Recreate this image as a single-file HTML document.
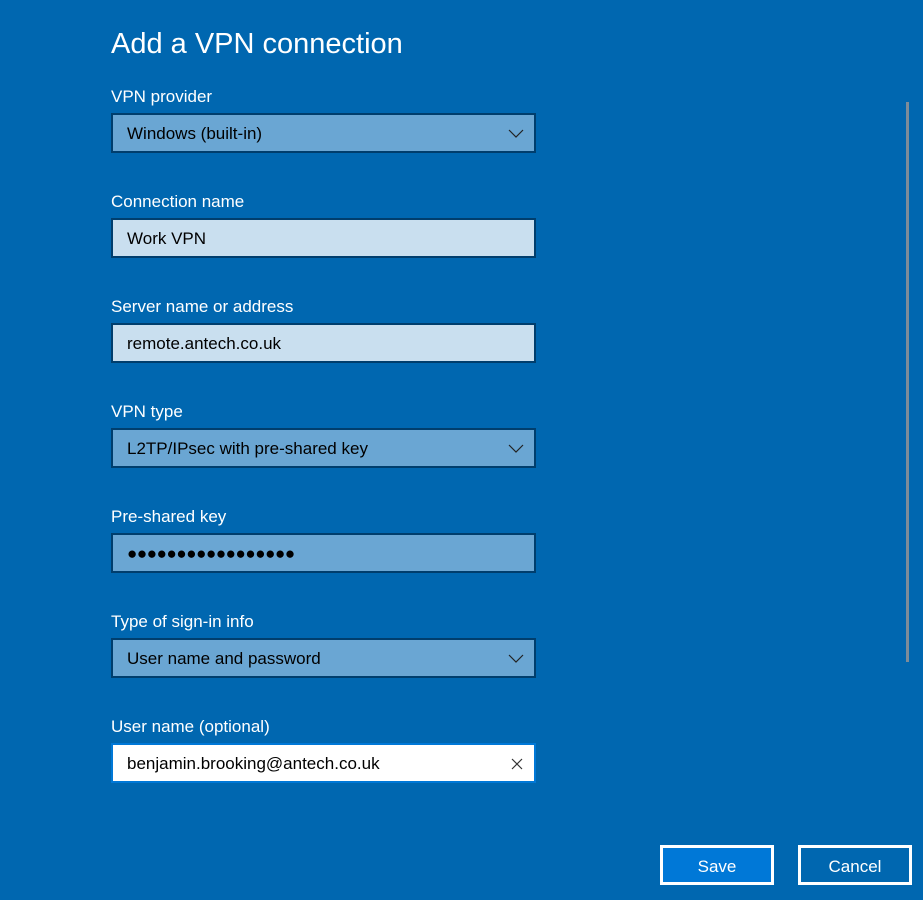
<!DOCTYPE html>
<html><head><style>
body{margin:0;width:923px;height:900px;background:#0067b0;font-family:"Liberation Sans",sans-serif;color:#fff;position:relative;overflow:hidden}
.t{position:absolute;left:111px;top:28px;font-size:29px;letter-spacing:0}
.l{position:absolute;left:111px;font-size:17px}
.f{position:absolute;left:111px;height:36px;border:2px solid #003e6d;box-sizing:content-box;color:#000;font-size:17px;line-height:38px;padding-left:14px;width:407px}
.d{background:#6aa6d3}
.x{background:#c9dfef}
.w{background:#fff;border-color:#0078d7}
.ch{position:absolute;right:10px;top:14px}
.sb{position:absolute;left:906px;top:102px;width:3px;height:560px;background:#7d8c99}
.b{position:absolute;top:845px;width:108px;height:34px;border:3px solid #fff;font-size:17px;line-height:38px;text-align:center}
</style></head><body>
<div class="t">Add a VPN connection</div>
<div class="l" style="top:87px">VPN provider</div>
<div class="f d" style="top:113px">Windows (built-in)<svg class="ch" width="16" height="10"><path d="M1 1l7 7 7-7" stroke="#222" fill="none" stroke-width="1.2"/></svg></div>
<div class="l" style="top:192px">Connection name</div>
<div class="f x" style="top:218px">Work VPN</div>
<div class="l" style="top:297px">Server name or address</div>
<div class="f x" style="top:323px">remote.antech.co.uk</div>
<div class="l" style="top:402px">VPN type</div>
<div class="f d" style="top:428px">L2TP/IPsec with pre-shared key<svg class="ch" width="16" height="10"><path d="M1 1l7 7 7-7" stroke="#222" fill="none" stroke-width="1.2"/></svg></div>
<div class="l" style="top:507px">Pre-shared key</div>
<div class="f d" style="top:533px;letter-spacing:-0.4px">●●●●●●●●●●●●●●●●●</div>
<div class="l" style="top:612px">Type of sign-in info</div>
<div class="f d" style="top:638px">User name and password<svg class="ch" width="16" height="10"><path d="M1 1l7 7 7-7" stroke="#222" fill="none" stroke-width="1.2"/></svg></div>
<div class="l" style="top:717px">User name (optional)</div>
<div class="f w" style="top:743px">benjamin.brooking@antech.co.uk<svg class="ch" style="top:13px;right:11px" width="12" height="12"><path d="M1 1l10 10M11 1L1 11" stroke="#333" stroke-width="1.2"/></svg></div>
<div class="sb"></div>
<div class="b" style="left:660px;background:#0078d7">Save</div>
<div class="b" style="left:798px">Cancel</div>
</body></html>
